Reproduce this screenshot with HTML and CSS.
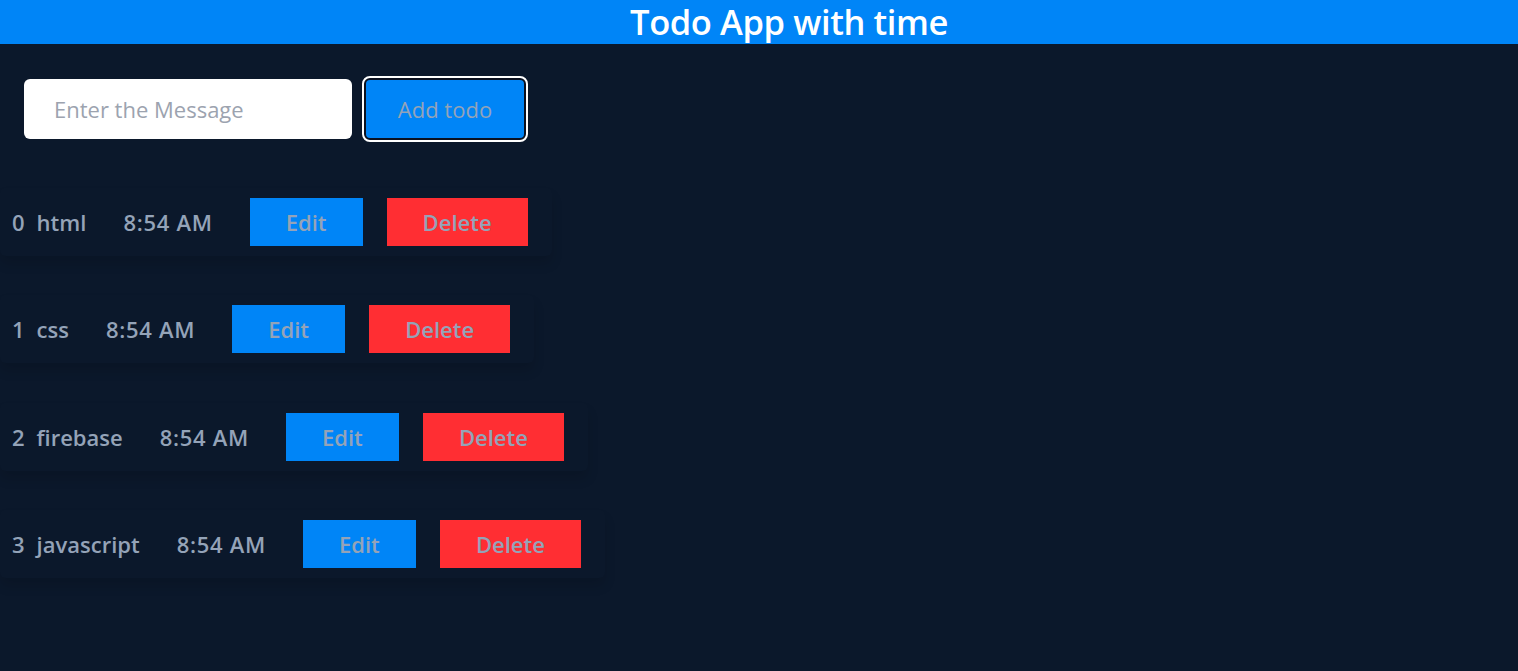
FILE: index.html
```html
<!DOCTYPE html>
<html lang="en">
<head>
<meta charset="UTF-8">
<title>Todo App with time</title>
<link rel="stylesheet" href="styles.css">
</head>
<body>
<header class="header"><h1 class="title">Todo App with time</h1></header>
<form class="form">
  <input class="input" type="text" placeholder="Enter the Message">
  <button class="add-btn" type="button">Add todo</button>
</form>
<ul class="list">
  <li class="item"><span class="idx">0</span><span class="text">html</span><span class="time">8:54 AM</span><button class="btn edit">Edit</button><button class="btn delete">Delete</button></li>
  <li class="item"><span class="idx">1</span><span class="text">css</span><span class="time">8:54 AM</span><button class="btn edit">Edit</button><button class="btn delete">Delete</button></li>
  <li class="item"><span class="idx">2</span><span class="text">firebase</span><span class="time">8:54 AM</span><button class="btn edit">Edit</button><button class="btn delete">Delete</button></li>
  <li class="item"><span class="idx">3</span><span class="text">javascript</span><span class="time">8:54 AM</span><button class="btn edit">Edit</button><button class="btn delete">Delete</button></li>
</ul>
</body>
</html>
```
FILE: styles.css
```css
* { box-sizing: border-box; }
html, body { margin: 0; padding: 0; }
body {
  background: #0b182b;
  font-family: "Open Sans", "Noto Sans", sans-serif;
  color: #94a3b8;
  min-height: 671px;
}
.header {
  background: #0085f7;
  height: 44px;
  display: flex;
  justify-content: center;
  align-items: center;
  padding-left: 60px;
}
.title {
  margin: 0;
  color: #ffffff;
  font-size: 34.5px;
  font-weight: 600;
  line-height: 44px;
  letter-spacing: -0.4px;
}
.form {
  display: flex;
  align-items: center;
  padding: 34px 0 0 24px;
  gap: 12px;
}
.input {
  width: 328px;
  height: 60px;
  border: none;
  border-radius: 6px;
  background: #ffffff;
  padding: 0 0 0 30px;
  font-family: inherit;
  font-size: 22px;
  outline: none;
}
.input::placeholder { color: #9ca3af; }
.add-btn {
  width: 162px;
  height: 62px;
  background: #0085f7;
  border: 2px solid #0b1120;
  border-radius: 6px;
  outline: 2px solid #ffffff;
  font-family: inherit;
  font-size: 22px;
  color: #94a3b8;
  padding: 0;
}
.list {
  list-style: none;
  margin: 48px 0 0 0;
  padding: 0;
}
.item {
  display: flex;
  align-items: center;
  width: fit-content;
  padding: 10px 24px 10px 12px;
  margin-bottom: 39.3px;
  font-size: 22px;
  font-weight: 600;
  box-shadow: 0 8px 12px rgba(0, 0, 0, 0.12);
  border-radius: 6px;
}
.idx { margin-right: 12px; }
.text { margin-right: 37px; }
.time { margin-right: 37px; letter-spacing: 0.7px; }
.btn {
  height: 48px;
  border: none;
  border-radius: 0;
  font-family: inherit;
  font-size: 22px;
  font-weight: 600;
  color: #94a3b8;
  padding: 0;
}
.edit { width: 113px; background: #0085f7; margin-right: 24px; }
.delete { width: 141px; background: #ff2e33; }
```
